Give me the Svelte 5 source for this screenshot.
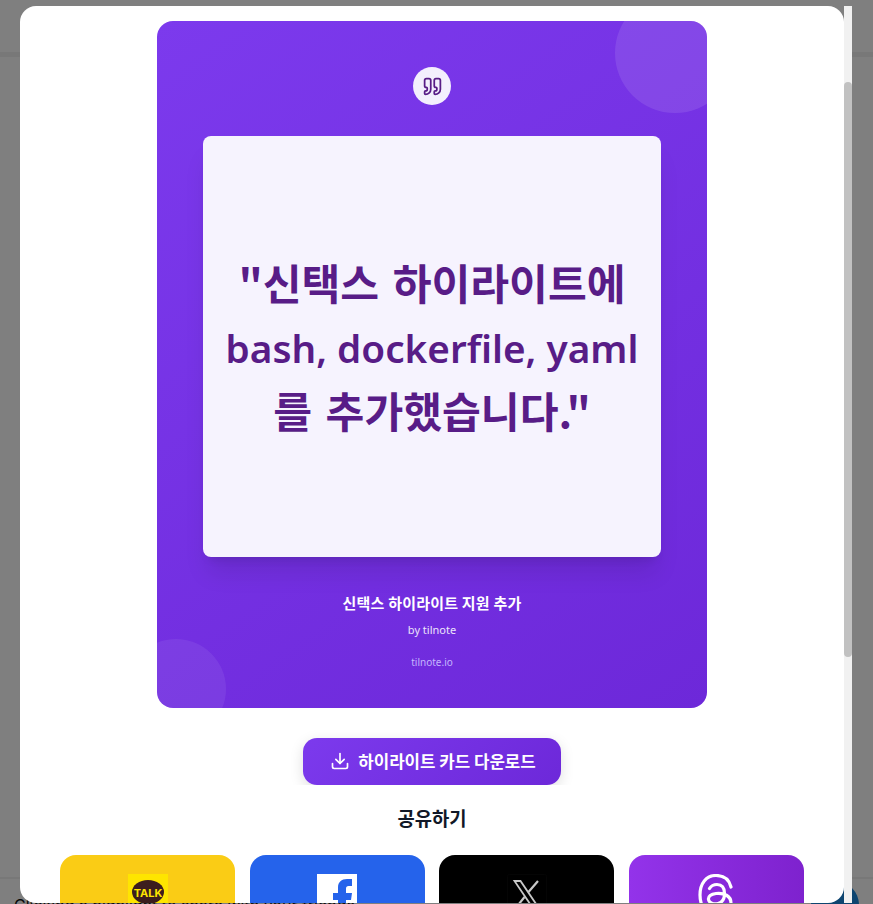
<script>
  const shares = [
    { name: 'kakao', cls: 'kakao' },
    { name: 'facebook', cls: 'facebook' },
    { name: 'x', cls: 'xcom' },
    { name: 'threads', cls: 'threads' }
  ];
</script>

<div class="page">
  <header class="pagehead"></header>
  <div class="pagefoot"><span class="foottext">Clicking a highlight to share with your friends</span></div>
  <span class="fab"></span>
  <div class="backdrop"></div>
  <div class="modal">
    <div class="scroller">
      <div class="card">
        <span class="blob one"></span>
        <span class="blob two"></span>
        <div class="quoteicon">
          <svg width="21" height="21" viewBox="0 0 24 24" fill="none" stroke="#581c87" stroke-width="2" stroke-linejoin="round" stroke-linecap="round">
            <path d="M16 3a2 2 0 0 0-2 2v6a2 2 0 0 0 2 2 1 1 0 0 1 1 1v1a2 2 0 0 1-2 2 1 1 0 0 0-1 1v2a1 1 0 0 0 1 1 6 6 0 0 0 6-6V5a2 2 0 0 0-2-2z" />
            <path d="M5 3a2 2 0 0 0-2 2v6a2 2 0 0 0 2 2 1 1 0 0 1 1 1v1a2 2 0 0 1-2 2 1 1 0 0 0-1 1v2a1 1 0 0 0 1 1 6 6 0 0 0 6-6V5a2 2 0 0 0-2-2z" />
          </svg>
        </div>
        <div class="quotebox">
          <div class="lines">
            <span class="ko">"신택스 하이라이트에</span>
            <span class="en">bash, dockerfile, yaml</span>
            <span class="ko last">를 추가했습니다."</span>
          </div>
        </div>
        <div class="title">신택스 하이라이트 지원 추가</div>
        <div class="by">by tilnote</div>
        <div class="site">tilnote.io</div>
      </div>
      <div class="downloadclip">
        <button class="download">
          <svg width="20" height="20" viewBox="0 0 24 24" fill="none" stroke="currentColor" stroke-width="2" stroke-linecap="round" stroke-linejoin="round">
            <path d="M21 15v4a2 2 0 0 1-2 2H5a2 2 0 0 1-2-2v-4" /><path d="M7 10l5 5 5-5" /><path d="M12 15V3" />
          </svg>
          하이라이트 카드 다운로드
        </button>
      </div>
      <h3>공유하기</h3>
      <div class="shares">
        {#each shares as s}
          <div class="share {s.cls}">
            {#if s.name === 'kakao'}
              <svg class="logo" width="40" height="40" viewBox="0 0 40 40">
                <rect width="40" height="40" fill="#fee500" />
                <ellipse cx="20" cy="18" rx="16" ry="12" fill="#3c1e1e" />
                <text x="20" y="22.500" text-anchor="middle" font-size="11" font-weight="700" fill="#fee500" font-family="Inter, sans-serif">TALK</text>
              </svg>
            {:else if s.name === 'facebook'}
              <svg class="logo" width="40" height="40" viewBox="0 0 40 40">
                <rect width="40" height="40" fill="#fff" />
                <path d="M35 5h-5c-5.500 0-9 3-9 8.500V19h-5v7h5v14h8V26h5l1-7h-6v-4.500c0-1.500.8-2.500 2.500-2.500H35z" fill="#2563eb" />
              </svg>
            {:else if s.name === 'x'}
              <svg class="logo" width="40" height="40" viewBox="0 0 40 40" fill="none">
                <rect x="0.500" y="0.500" width="39" height="39" rx="2" fill="#000" stroke="#050505" />
                <path d="M7.500 7h6l19 28h-6z" stroke="#c8c8c8" stroke-width="1.800" />
                <path d="M31 7 21.500 18M17.500 23 8 35" stroke="#c8c8c8" stroke-width="2.200" />
              </svg>
            {:else}
              <svg class="logo" width="40" height="40" viewBox="0 0 40 40" fill="none" stroke="#fff" stroke-width="3.200" stroke-linecap="round">
                <path d="M35 13C33 5 27 1.500 20 1.500 10 1.500 4 9.500 4 21s6 19.500 16 19.500c8 0 15-5 15-11.500 0-7-7-10.500-15-9.500-5 .6-8 3-7.500 6 .6 3.500 5 5 9.500 4 5-1.200 6.500-5.500 6.500-10 0-6-2.500-9-7.500-9-3.500 0-6 1.500-7.500 4" />
              </svg>
            {/if}
          </div>
        {/each}
      </div>
    </div>
    <div class="track"><div class="thumb"></div></div>
  </div>
</div>

<style>
  :global(body) {
    margin: 0;
    font-family: "Noto Sans CJK KR", "Noto Sans", sans-serif;
    overflow: hidden;
  }
  .page {
    position: relative;
    width: 873px;
    height: 904px;
    overflow: hidden;
    background: #fff;
  }
  .pagehead {
    height: 52px;
    border-bottom: 5px solid #f1f1f1;
  }
  .pagefoot {
    position: absolute;
    left: 0;
    right: 0;
    top: 877px;
    height: 27px;
    border-top: 2px solid #f0f0f0;
    box-sizing: border-box;
  }
  .foottext {
    position: absolute;
    left: 14px;
    top: 16px;
    font-family: Inter, sans-serif;
    font-size: 16px;
    color: #111;
    white-space: nowrap;
  }
  .fab {
    position: absolute;
    left: 811px;
    top: 881px;
    width: 48px;
    height: 48px;
    border-radius: 50%;
    background: #1c8ae0;
  }
  .backdrop {
    position: absolute;
    inset: 0;
    background: rgba(0, 0, 0, 0.5);
  }
  .modal {
    position: absolute;
    left: 20px;
    top: 6px;
    width: 832px;
    height: 897px;
    display: flex;
  }
  .scroller {
    flex: 1;
    min-width: 0;
    display: flex;
    flex-direction: column;
    align-items: center;
    padding-top: 15px;
    background: #fff;
    border-radius: 16px;
    overflow: hidden;
  }
  .track {
    width: 8px;
    background: #f1f1f1;
    flex: none;
    padding-top: 76px;
    box-sizing: border-box;
  }
  .thumb {
    height: 575px;
    background: #c1c1c1;
    border-radius: 4px;
  }
  .card {
    position: relative;
    width: 550px;
    height: 687px;
    flex: none;
    border-radius: 16px;
    overflow: hidden;
    display: flex;
    flex-direction: column;
    align-items: center;
    color: #fff;
    background-image: linear-gradient(145deg, #7c3aed 0%, #6d28d9 100%);
  }
  .blob {
    position: absolute;
    border-radius: 50%;
    background: rgba(255, 255, 255, 0.1);
  }
  .blob.one {
    width: 120px;
    height: 120px;
    left: 458px;
    top: -28px;
  }
  .blob.two {
    width: 100px;
    height: 100px;
    left: -31px;
    top: 618px;
    background: rgba(255, 255, 255, 0.07);
  }
  .quoteicon {
    position: relative;
    margin-top: 46px;
    width: 38px;
    height: 38px;
    border-radius: 50%;
    background: #f3effd;
    display: flex;
    align-items: center;
    justify-content: center;
  }
  .quotebox {
    position: relative;
    margin-top: 31px;
    width: 458px;
    height: 421px;
    border-radius: 8px;
    background: #f6f3fe;
    box-shadow: 0 20px 25px -5px rgba(0, 0, 0, 0.1), 0 8px 10px -6px rgba(0, 0, 0, 0.1);
    display: flex;
    align-items: center;
    justify-content: center;
  }
  .lines {
    display: flex;
    flex-direction: column;
    align-items: center;
    gap: 0;
    color: #581c87;
    white-space: nowrap;
  }
  .ko {
    display: block;
    height: 65px;
    font-size: 42.200px;
    font-weight: 600;
    line-height: 65px;
    word-spacing: 4px;
  }
  .ko.last {
    line-height: 61px;
  }
  .en {
    display: block;
    height: 65px;
    font-family: "Noto Sans", sans-serif;
    font-size: 38.700px;
    font-weight: 600;
    line-height: 69px;
  }
  .title {
    position: relative;
    margin-top: 35px;
    font-size: 15px;
    line-height: 22px;
    font-weight: 700;
    letter-spacing: 0.2px;
  }
  .by {
    position: relative;
    margin-top: 7px;
    font-family: "Noto Sans", sans-serif;
    font-size: 11px;
    line-height: 18px;
    color: #ebe3fb;
  }
  .site {
    position: relative;
    margin-top: 15px;
    font-family: "Noto Sans", sans-serif;
    font-size: 10px;
    line-height: 16px;
    color: #c4b5fd;
  }
  .downloadclip {
    margin-top: 22px;
    flex: none;
    padding: 8px 12px 0;
    overflow: hidden;
  }
  .download {
    width: 258px;
    height: 47px;
    border: 0;
    border-radius: 14px;
    color: #fff;
    font-family: inherit;
    font-size: 16.800px;
    font-weight: 700;
    background: linear-gradient(135deg, #7c3aed, #6d28d9);
    box-shadow: 0 4px 14px rgba(0, 0, 0, 0.13);
    display: flex;
    align-items: center;
    justify-content: center;
    gap: 8px;
    padding: 0 0 1px 2px;
  }
  h3 {
    margin: 19px 0 0;
    font-size: 18.800px;
    line-height: 28px;
    font-weight: 700;
    color: #111827;
  }
  .shares {
    margin-top: 23px;
    display: flex;
    gap: 14.500px;
  }
  .share {
    width: 175px;
    height: 80px;
    flex: none;
    border-radius: 16px;
    display: flex;
    justify-content: center;
    padding-top: 19px;
    box-sizing: border-box;
  }
  .kakao { background: #facc15; }
  .facebook { background: #2563eb; }
  .xcom { background: #000; }
  .threads { background: linear-gradient(90deg, #9333ea, #7e22ce); }
  .logo { display: block; flex: none; }
</style>
